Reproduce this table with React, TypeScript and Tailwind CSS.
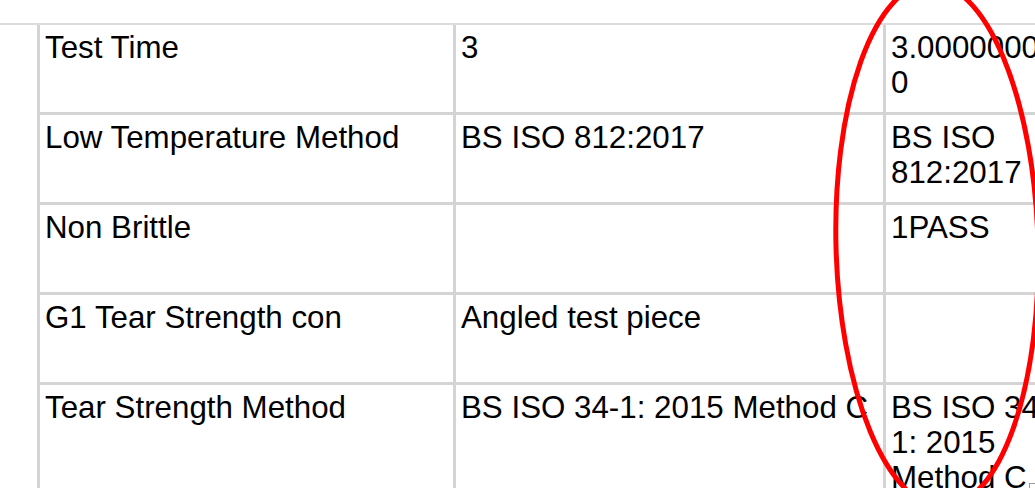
const rows = [
  { name: "Test Time", spec: "3", value: "3.00000000" },
  { name: "Low Temperature Method", spec: "BS ISO 812:2017", value: "BS ISO 812:2017" },
  { name: "Non Brittle", spec: "", value: "1PASS" },
  { name: "G1 Tear Strength con", spec: "Angled test piece", value: "" },
  { name: "Tear Strength Method", spec: "BS ISO 34-1: 2015 Method C", value: "BS ISO 34-1: 2015 Method C" },
];

const cell = "border-r-[3px] border-b-[3px] border-[#d4d4d4] pl-[5px] pr-[5px] pt-[5px] min-h-[90px] break-words";

export default function App() {
  return (
    <div
      className="relative h-[488px] w-full overflow-hidden bg-white text-black text-[31.3px] leading-[35px]"
      style={{ fontFamily: '"Liberation Sans", Arial, sans-serif' }}
    >
      <div className="mt-[23px] border-t-2 border-[#dcdcdc]">
        <div className="ml-[37px] border-l-[3px] border-[#d4d4d4] flex flex-col">
          {rows.map((r, i) => (
            <div key={i} className="flex">
              <div className={`${cell} w-[416px] shrink-0 ${i === 0 ? "min-h-[89px]" : ""}`}>{r.name}</div>
              <div className={`${cell} w-[430px] shrink-0 ${i === 0 ? "min-h-[89px]" : ""}`}>{r.spec}</div>
              <div className={`${cell} w-[173px] shrink-0 ${i === 0 ? "min-h-[89px]" : ""}`}>{r.value}</div>
            </div>
          ))}
        </div>
      </div>

      {/* red annotation ring */}
      <svg className="pointer-events-none absolute left-0 top-0" width="1035" height="488">
        <ellipse
          cx="937"
          cy="245"
          rx="101"
          ry="262"
          fill="none"
          stroke="#ff0000"
          strokeWidth="5"
          transform="rotate(-1.5 937 245)"
        />
      </svg>

      {/* resize grip corner */}
      <div className="absolute left-[1029px] top-[483px] h-[5px] w-[6px] border-l border-t border-[#9a9a9a]" />
    </div>
  );
}
